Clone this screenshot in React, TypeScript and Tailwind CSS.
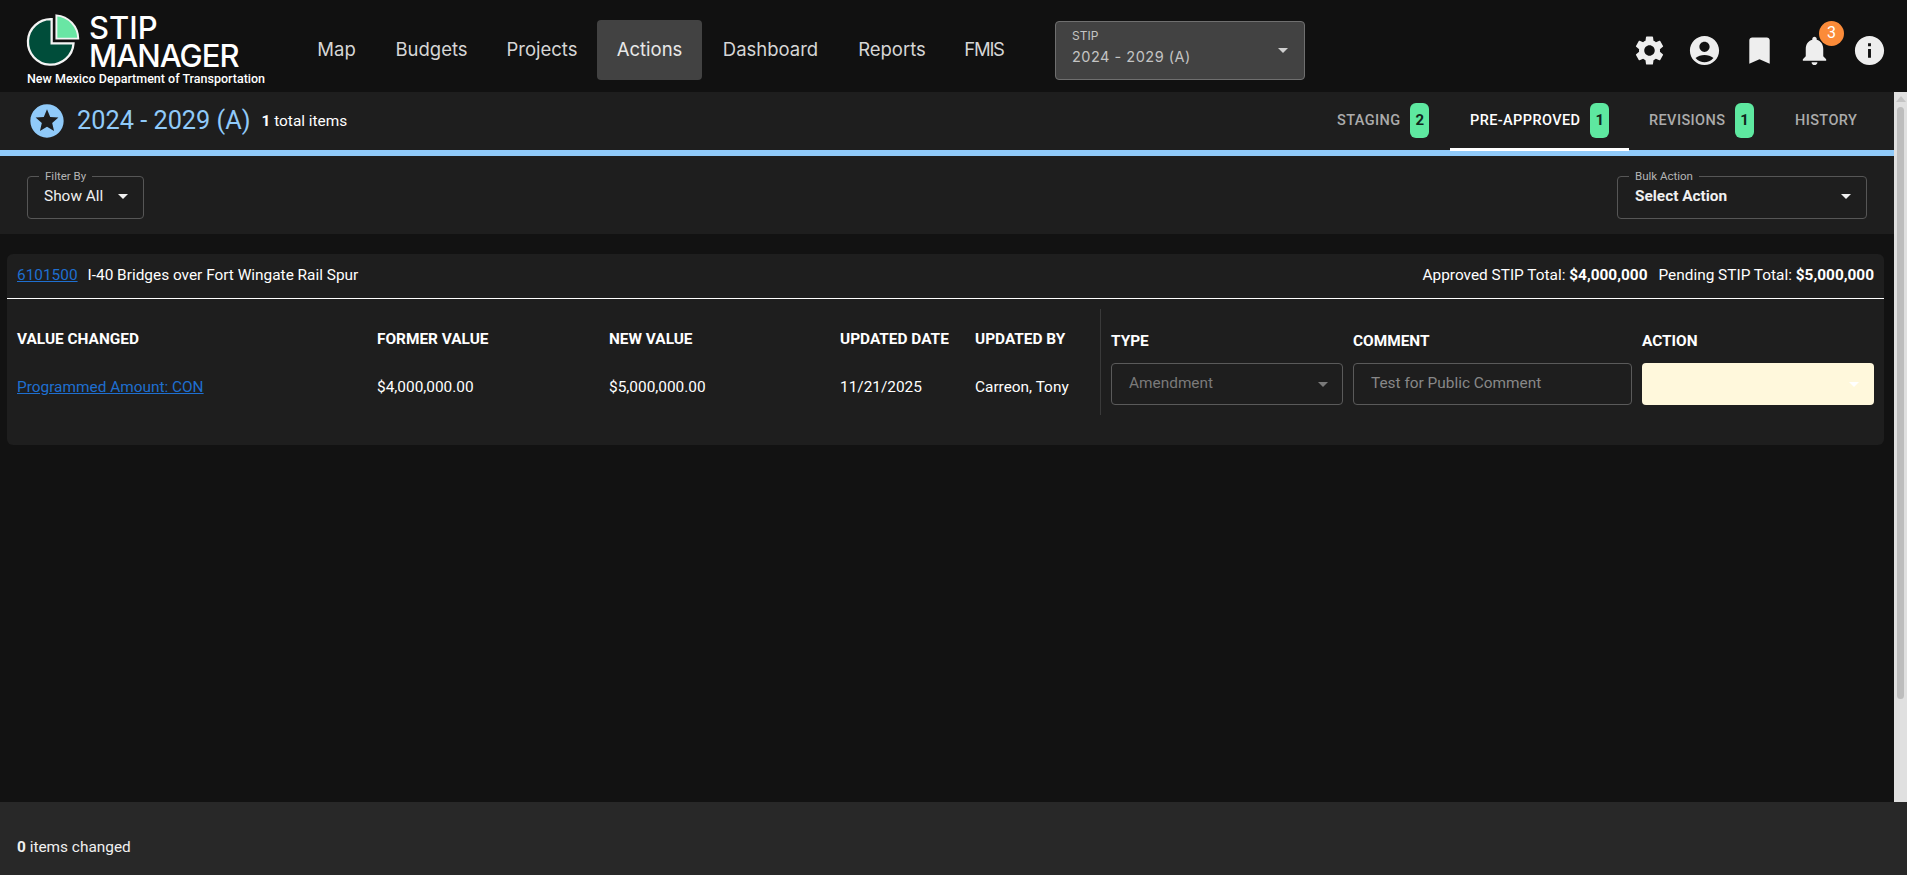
import { ReactNode } from "react";

const roboto = "font-['Roboto',sans-serif]";
const nav = "font-['Inter',sans-serif]";

const navItems = [
  { label: "Map", width: "w-[79px]" },
  { label: "Budgets", width: "w-[111px]" },
  { label: "Projects", width: "w-[110px]" },
  { label: "Actions", width: "w-[105px]", active: true },
  { label: "Dashboard", width: "w-[137px]" },
  { label: "Reports", width: "w-[106px]" },
  { label: "FMIS", width: "w-[78px] tracking-[-1.3px]" },
];

const icons = {
  settings:
    "M19.14 12.94c.04-.3.06-.61.06-.94 0-.32-.02-.64-.07-.94l2.03-1.58c.18-.14.23-.41.12-.61l-1.92-3.32c-.12-.22-.37-.29-.59-.22l-2.39.96c-.5-.38-1.03-.7-1.62-.94l-.36-2.54c-.04-.24-.24-.41-.48-.41h-3.84c-.24 0-.43.17-.47.41l-.36 2.54c-.59.24-1.13.57-1.62.94l-2.39-.96c-.22-.08-.47 0-.59.22L2.74 8.87c-.12.21-.08.47.12.61l2.03 1.58c-.05.3-.09.63-.09.94s.02.64.07.94l-2.03 1.58c-.18.14-.23.41-.12.61l1.92 3.32c.12.22.37.29.59.22l2.39-.96c.5.38 1.03.7 1.62.94l.36 2.54c.05.24.24.41.48.41h3.84c.24 0 .44-.17.47-.41l.36-2.54c.59-.24 1.13-.56 1.62-.94l2.39.96c.22.08.47 0 .59-.22l1.92-3.32c.12-.22.07-.47-.12-.61l-2.01-1.58zM12 15.6c-1.98 0-3.6-1.62-3.6-3.6s1.62-3.6 3.6-3.6 3.6 1.62 3.6 3.6-1.62 3.6-3.6 3.6z",
  account:
    "M12 2C6.48 2 2 6.48 2 12s4.48 10 10 10 10-4.48 10-10S17.52 2 12 2zm0 4c1.93 0 3.5 1.57 3.5 3.5S13.93 13 12 13s-3.5-1.57-3.5-3.5S10.07 6 12 6zm0 14c-2.03 0-4.43-.82-6.14-2.88C7.55 15.8 9.68 15 12 15s4.45.8 6.14 2.12C16.43 19.18 14.03 20 12 20z",
  bookmark: "M17 3H7c-1.1 0-1.99.9-1.99 2L5 21l7-3 7 3V5c0-1.1-.9-2-2-2z",
  bell: "M12 22c1.1 0 2-.9 2-2h-4c0 1.1.89 2 2 2zm6-6v-5c0-3.07-1.64-5.64-4.5-6.32V4c0-.83-.67-1.5-1.5-1.5s-1.5.67-1.5 1.5v.68C7.63 5.36 6 7.92 6 11v5l-2 2v1h16v-1l-2-2z",
  info: "M12 2C6.48 2 2 6.48 2 12s4.48 10 10 10 10-4.48 10-10S17.52 2 12 2zm1 15h-2v-6h2v6zm0-8h-2V7h2v2z",
  stars:
    "M11.99 2C6.47 2 2 6.48 2 12s4.47 10 9.99 10C17.52 22 22 17.52 22 12S17.52 2 11.99 2zm4.24 16L12 15.45 7.77 18l1.12-4.81-3.73-3.23 4.92-.42L12 5l1.92 4.53 4.92.42-3.73 3.23L16.23 18z",
};

function Icon({ d, className }: { d: string; className?: string }) {
  return (
    <svg viewBox="0 0 24 24" className={className} fill="currentColor">
      <path d={d} />
    </svg>
  );
}

function Caret({ className }: { className?: string }) {
  return <div className={`h-0 w-0 border-x-[5px] border-t-[5px] border-x-transparent ${className}`} />;
}

function Logo() {
  return (
    <svg viewBox="0 0 60 60" className="mt-[4px] h-[57px] w-[57px] shrink-0">
      <path d="M27 7.5 A24 24 0 1 0 50 33 L27 33 Z" fill="#004d3a" stroke="#f4f4f4" strokeWidth="2.4" />
      <path d="M32 3.5 A25 25 0 0 1 55 28 L32 28 Z" fill="#69e6a4" stroke="#f4f4f4" strokeWidth="2" />
    </svg>
  );
}

function OutlinedSelect({
  legend,
  value,
  width,
  bold,
}: {
  legend: string;
  value: string;
  width: string;
  bold?: boolean;
}) {
  return (
    <div className={`relative flex h-[43px] items-center justify-between rounded border border-[#565656] pb-[2px] pr-[15px] ${width}`}>
      <span className="absolute -top-[8px] left-[11px] bg-[#1e1e1e] px-[6px] text-[11.5px] leading-[14px] text-[#b4b4b4]">
        {legend}
      </span>
      <span className={`text-[15.4px] text-[#f0f0f0] ${bold ? "font-bold" : ""}`}>{value}</span>
      <Caret className="border-t-[#f0f0f0]" />
    </div>
  );
}

function Tab({
  label,
  count,
  active,
  width,
}: {
  label: string;
  count?: number;
  active?: boolean;
  width: string;
}) {
  return (
    <div
      className={`flex h-[59px] items-center border-b-[3px] pl-5 text-[14.5px] font-medium tracking-[0.4px] ${width} ${
        active ? "border-white text-white" : "border-transparent text-[#ababab]"
      }`}
    >
      <span className="pt-[2px]">{label}</span>
      {count !== undefined && (
        <span className="ml-[10px] flex h-[35px] w-[19px] items-center justify-center rounded-md bg-[#5ee8a0] text-[15px] font-bold text-[#10261c]">
          {count}
        </span>
      )}
    </div>
  );
}

function HeaderCell({ children, className }: { children: ReactNode; className?: string }) {
  return <div className={`text-[15.4px] font-bold text-white ${className ?? ""}`}>{children}</div>;
}

export default function App() {
  return (
    <div className={`flex h-[875px] w-[1907px] flex-col overflow-hidden bg-[#121212] ${roboto}`}>
      <header className="flex h-[92px] shrink-0 items-center bg-[#111111] pt-[8px]">
        <div className="ml-[27px] flex w-[270px] flex-col self-start">
          <div className="-ml-[1px] flex h-[64px] items-start">
            <Logo />
            <div className={`ml-[6px] pt-[6px] text-[31px] font-medium leading-[28px] text-white ${nav}`}>
              <div>STIP</div>
              <div className="tracking-[-1px]">MANAGER</div>
            </div>
          </div>
          <div className="h-[14px] text-[12.5px] font-medium leading-[14px] text-white">
            New Mexico Department of Transportation
          </div>
        </div>
        <nav className={`flex h-[60px] items-center text-[18.5px] ${nav}`}>
          {navItems.map((item) => (
            <div
              key={item.label}
              className={`flex h-[60px] items-center justify-center rounded text-[#d6d6d6] ${item.width} ${
                item.active ? "bg-[#424242] text-[#e8e8e8]" : ""
              }`}
            >
              {item.label}
            </div>
          ))}
        </nav>
        <div className={`ml-[32px] flex h-[59px] w-[250px] items-center justify-between rounded border border-[#6f6f6f] bg-[#424242] pl-4 pr-4 ${nav}`}>
          <div className="pb-[5px]">
            <div className="text-[12px] leading-[16px] text-[#c4c4c4]">STIP</div>
            <div className="mt-[3px] text-[14.5px] leading-[20px] tracking-[0.5px] text-[#c4c4c4]">2024 - 2029 (A)</div>
          </div>
          <Caret className="border-t-[#d0d0d0]" />
        </div>
        <div className="ml-auto mr-[20px] flex items-center gap-[20px] text-[#eeeeee]">
          <Icon d={icons.settings} className="h-[35px] w-[35px]" />
          <Icon d={icons.account} className="h-[35px] w-[35px]" />
          <Icon d={icons.bookmark} className="h-[35px] w-[35px]" />
          <div className="relative">
            <Icon d={icons.bell} className="h-[35px] w-[35px]" />
            <span className="absolute -right-[12px] -top-[12px] flex h-[25px] w-[25px] items-center justify-center rounded-full bg-[#fb8b39] text-[16px] text-white">
              3
            </span>
          </div>
          <Icon d={icons.info} className="h-[35px] w-[35px]" />
        </div>
      </header>

      <div className="flex min-h-0 flex-1">
        <main className="flex min-w-0 flex-1 flex-col">
          <div className="flex h-[64px] shrink-0 items-start border-b-[6px] border-[#90caf9] bg-[#1e1e1e]">
            <div className="flex h-[58px] flex-1 items-center pl-[27px]">
              <Icon d={icons.stars} className="h-[40px] w-[40px] text-[#90caf9]" />
              <span className="ml-[10px] text-[25.3px] text-[#90caf9]">2024 - 2029 (A)</span>
              <span className="ml-[11px] pt-[1px] text-[15.4px] text-white">
                <b>1</b> total items
              </span>
            </div>
            <div className="z-10 mr-[18px] flex">
              <Tab label="STAGING" count={2} width="w-[133px]" />
              <Tab label="PRE-APPROVED" count={1} active width="w-[179px]" />
              <Tab label="REVISIONS" count={1} width="w-[146px]" />
              <Tab label="HISTORY" width="w-[101px]" />
            </div>
          </div>

          <div className="flex h-[78px] shrink-0 items-start justify-between bg-[#1e1e1e] pl-[27px] pr-[27px] pt-[20px]">
            <OutlinedSelect legend="Filter By" value="Show All" width="w-[117px] pl-[16px]" />
            <OutlinedSelect legend="Bulk Action" value="Select Action" width="w-[250px] pl-[17px]" bold />
          </div>

          <section className="ml-[7px] mr-[10px] mt-[20px] h-[191px] rounded-md bg-[#1e1e1e]">
            <div className="flex h-[45px] items-center justify-between border-b border-white px-[10px] text-[15.4px] text-white">
              <div className="flex items-center">
                <a className="text-[#1f6fd0] underline">6101500</a>
                <span className="ml-[10px]">I-40 Bridges over Fort Wingate Rail Spur</span>
              </div>
              <div>
                Approved STIP Total: <b>$4,000,000</b>
                <span className="ml-[11px]">
                  Pending STIP Total: <b>$5,000,000</b>
                </span>
              </div>
            </div>
            <div className="flex items-start pt-[10px]">
              <div className="grid w-[1093px] grid-cols-[360px_232px_231px_135px_125px] grid-rows-[60px_36px] items-center pl-[10px] pt-[1px] text-[15.4px] text-white">
                <HeaderCell>VALUE CHANGED</HeaderCell>
                <HeaderCell>FORMER VALUE</HeaderCell>
                <HeaderCell>NEW VALUE</HeaderCell>
                <HeaderCell>UPDATED DATE</HeaderCell>
                <HeaderCell>UPDATED BY</HeaderCell>
                <a className="text-[#1f6fd0] underline">Programmed Amount: CON</a>
                <div>$4,000,000.00</div>
                <div>$5,000,000.00</div>
                <div>11/21/2025</div>
                <div>Carreon, Tony</div>
              </div>
              <div className="h-[106px] w-px bg-[#3a3a3a]" />
              <div className="ml-[10px] grid flex-1 grid-cols-[232px_279px_232px] content-start gap-x-[10px] pt-[21px]">
                <HeaderCell className="h-[33px]">TYPE</HeaderCell>
                <HeaderCell className="h-[33px]">COMMENT</HeaderCell>
                <HeaderCell className="h-[33px]">ACTION</HeaderCell>
                <div className="flex h-[42px] items-center justify-between rounded border border-[#5a5a5a] pl-[17px] pr-[14px]">
                  <span className="text-[15.4px] text-[#7a7a7a]">Amendment</span>
                  <Caret className="border-t-[#7a7a7a]" />
                </div>
                <div className="flex h-[42px] items-center rounded border border-[#5a5a5a] pl-[17px] text-[15.4px] text-[#888888]">
                  Test for Public Comment
                </div>
                <div className="flex h-[42px] items-center justify-end rounded bg-[#fff8dc] pr-[15px]">
                  <Caret className="border-t-white" />
                </div>
              </div>
            </div>
          </section>
        </main>
        <div className="flex w-[13px] shrink-0 flex-col items-center bg-[#e0e0e0] pt-[4px]">
          <div className="h-0 w-0 border-x-[5px] border-b-[6px] border-x-transparent border-b-[#c4c4c4]" />
          <div className="mt-[5px] h-[592px] w-[7px] rounded-[4px] bg-[#bdbdbd]" />
        </div>
      </div>

      <footer className="flex h-[73px] shrink-0 items-center bg-[#282828] pl-[17px] text-[15.4px] text-[#f0f0f0]">
        <span className="pt-[19px]">
          <b>0</b> items changed
        </span>
      </footer>
    </div>
  );
}
